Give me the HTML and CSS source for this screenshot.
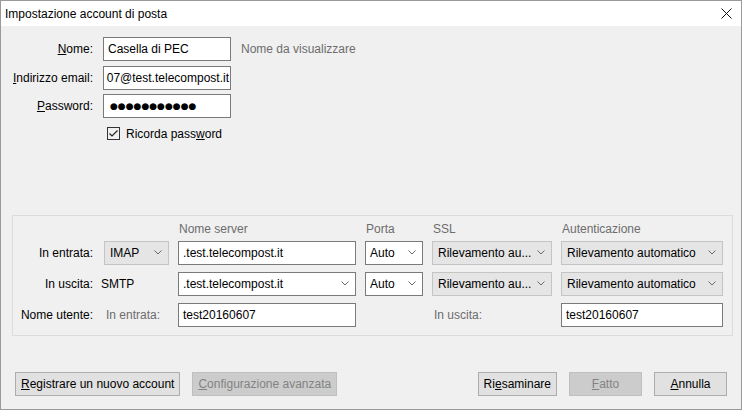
FILE: index.html
```html
<!DOCTYPE html>
<html lang="it">
<head>
<meta charset="utf-8">
<title>Impostazione account di posta</title>
<link rel="stylesheet" href="styles.css">
</head>
<body>
<div class="window">
  <div class="titlebar">
    <span class="title">Impostazione account di posta</span>
    <svg class="close" width="11" height="11" viewBox="0 0 11 11"><path d="M0.5 0.5 L10.5 10.5 M10.5 0.5 L0.5 10.5" stroke="#111" stroke-width="1" fill="none"/></svg>
  </div>
  <div class="content">
    <div class="identity">
      <span class="lbl"><u>N</u>ome:</span>
      <div class="field">Casella di PEC</div>
      <span class="hint">Nome da visualizzare</span>

      <span class="lbl"><u>I</u>ndirizzo email:</span>
      <div class="field scrolled">07@test.telecompost.it</div>
      <span></span>

      <span class="lbl"><u>P</u>assword:</span>
      <div class="field"><span class="dots">●●●●●●●●●●●</span></div>
      <span></span>

      <div class="check">
        <span class="box"><svg width="11" height="11" viewBox="0 0 11 11"><path d="M1.5 5.5 L4 8 L9.5 2.5" stroke="#222" stroke-width="1.2" fill="none"/></svg></span>
        <span>Ricorda pass<u>w</u>ord</span>
      </div>
    </div>

    <div class="group">
      <div class="cols head">
        <span></span>
        <span></span>
        <span>Nome server</span>
        <span>Porta</span>
        <span>SSL</span>
        <span>Autenticazione</span>
      </div>
      <div class="cols rows">
        <span class="rlbl">In entrata:</span>
        <div class="select off"><span>IMAP</span><svg class="chev" width="8" height="5" viewBox="0 0 8 5"><path d="M0.5 0.5 L4 4 L7.5 0.5" stroke="#6a6a6a" fill="none"/></svg></div>
        <div class="field">.test.telecompost.it</div>
        <div class="select"><span>Auto</span><svg class="chev" width="8" height="5" viewBox="0 0 8 5"><path d="M0.5 0.5 L4 4 L7.5 0.5" stroke="#6a6a6a" fill="none"/></svg></div>
        <div class="select off"><span>Rilevamento au...</span><svg class="chev" width="8" height="5" viewBox="0 0 8 5"><path d="M0.5 0.5 L4 4 L7.5 0.5" stroke="#6a6a6a" fill="none"/></svg></div>
        <div class="select off"><span>Rilevamento automatico</span><svg class="chev" width="8" height="5" viewBox="0 0 8 5"><path d="M0.5 0.5 L4 4 L7.5 0.5" stroke="#6a6a6a" fill="none"/></svg></div>

        <span class="rlbl">In uscita:</span>
        <span class="plain">SMTP</span>
        <div class="select"><span>.test.telecompost.it</span><svg class="chev" width="8" height="5" viewBox="0 0 8 5"><path d="M0.5 0.5 L4 4 L7.5 0.5" stroke="#6a6a6a" fill="none"/></svg></div>
        <div class="select"><span>Auto</span><svg class="chev" width="8" height="5" viewBox="0 0 8 5"><path d="M0.5 0.5 L4 4 L7.5 0.5" stroke="#6a6a6a" fill="none"/></svg></div>
        <div class="select off"><span>Rilevamento au...</span><svg class="chev" width="8" height="5" viewBox="0 0 8 5"><path d="M0.5 0.5 L4 4 L7.5 0.5" stroke="#6a6a6a" fill="none"/></svg></div>
        <div class="select off"><span>Rilevamento automatico</span><svg class="chev" width="8" height="5" viewBox="0 0 8 5"><path d="M0.5 0.5 L4 4 L7.5 0.5" stroke="#6a6a6a" fill="none"/></svg></div>

        <span class="rlbl">Nome utente:</span>
        <span class="muted sub">In entrata:</span>
        <div class="field">test20160607</div>
        <span></span>
        <span class="muted sub2">In uscita:</span>
        <div class="field">test20160607</div>
      </div>
    </div>

    <div class="buttons">
      <button class="btn"><u>R</u>egistrare un nuovo account</button>
      <button class="btn disabled"><u>C</u>onfigurazione avanzata</button>
      <span class="spacer"></span>
      <button class="btn">Ri<u>e</u>saminare</button>
      <button class="btn disabled"><u>F</u>atto</button>
      <button class="btn"><u>A</u>nnulla</button>
    </div>
  </div>
</div>
</body>
</html>
```

FILE: styles.css
```css
* { box-sizing: border-box; }

html, body {
  margin: 0;
  padding: 0;
}

body {
  width: 742px;
  height: 410px;
  font-family: "Liberation Sans", Arial, sans-serif;
  font-size: 12px;
  color: #000;
  background: #f0f0f0;
}

.window {
  width: 742px;
  height: 410px;
  border: 1px solid #9a9a9a;
  display: flex;
  flex-direction: column;
  background: #f0f0f0;
}

.titlebar {
  height: 25px;
  flex: none;
  background: #fff;
  display: flex;
  align-items: center;
  justify-content: space-between;
  padding: 0 9px 0 4px;
}

.close { display: block; }

.content {
  flex: 1;
  display: flex;
  flex-direction: column;
}

.identity {
  display: grid;
  grid-template-columns: 92px 128px auto;
  grid-template-rows: 24px 24px 24px 17px;
  column-gap: 10px;
  row-gap: 4.5px;
  margin-top: 11px;
  align-items: center;
}

.lbl { text-align: right; }

.hint { color: #6d6d6d; }

.field {
  height: 24px;
  background: #fff;
  border: 1px solid #7a7a7a;
  padding: 0 4px;
  display: flex;
  align-items: center;
  white-space: nowrap;
  overflow: hidden;
}

.field.scrolled {
  justify-content: flex-end;
  padding: 0 1px 0 0;
}

.dots {
  font-family: "DejaVu Sans", sans-serif;
  font-size: 9px;
  letter-spacing: 0;
  padding-left: 2px;
}

.check {
  grid-column: 2 / 4;
  display: flex;
  align-items: center;
  gap: 6px;
  padding-left: 4px;
  margin-top: 5px;
}

.check .box {
  width: 13px;
  height: 13px;
  border: 1px solid #333;
  display: flex;
  align-items: center;
  justify-content: center;
  background: transparent;
}

.check .box svg { display: block; }

.group {
  margin: 75px 8px 0 11px;
  border: 1px solid #dcdcdc;
  padding: 5px 0 8px 0;
}

.cols {
  display: grid;
  grid-template-columns: 82px 65px 178px 58px 120px 162px;
  column-gap: 9px;
}

.head {
  height: 16px;
  line-height: 16px;
  margin-bottom: 4px;
  color: #6d6d6d;
}

.head span { padding-left: 1px; }

.rows {
  grid-template-rows: 24px 24px 24px;
  row-gap: 7px;
  align-items: center;
}

.rlbl {
  text-align: right;
  padding-right: 2px;
}

.plain { margin-left: -3px; }

.muted { color: #6d6d6d; }

.sub { padding-left: 2px; }
.sub2 { padding-left: 2px; }

.select {
  height: 24px;
  background: #fff;
  border: 1px solid #7a7a7a;
  display: flex;
  align-items: center;
  justify-content: space-between;
  padding: 0 6px 0 4px;
  white-space: nowrap;
  overflow: hidden;
}

.select.off {
  background: #e5e5e5;
  border-color: #c4c4c4;
  padding-left: 5px;
}

.chev { display: block; flex: none; }

.buttons {
  margin-top: auto;
  display: flex;
  gap: 12px;
  padding: 0 14px 13px 14px;
}

.spacer { flex: 1; }

.btn {
  height: 24px;
  min-width: 73px;
  padding: 0 5px;
  font-family: inherit;
  font-size: 12px;
  color: #000;
  background: #e1e1e1;
  border: 1px solid #adadad;
  border-radius: 0;
  white-space: nowrap;
}

.btn.disabled {
  background: #cccccc;
  border-color: #bfbfbf;
  color: #838383;
}
```
